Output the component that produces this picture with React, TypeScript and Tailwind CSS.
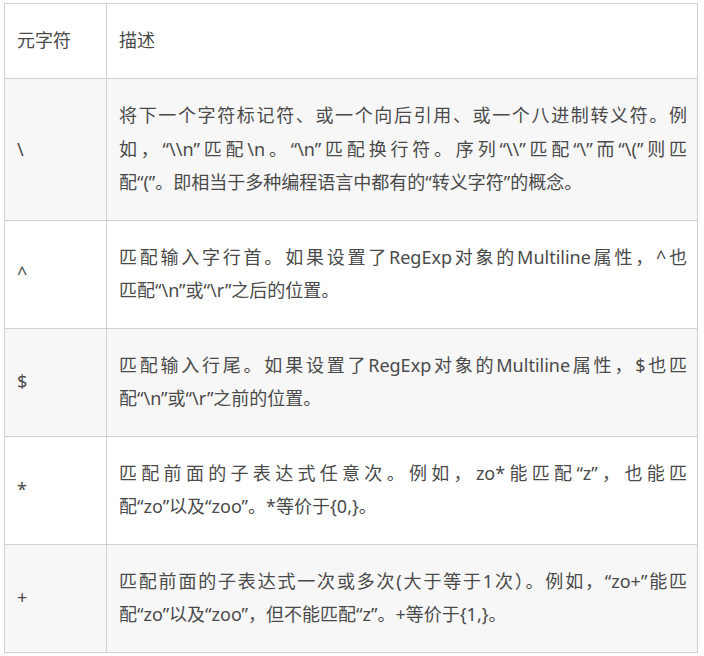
const rows: { ch: string; lines: string[] }[] = [
  {
    ch: '\\',
    lines: [
      '将下一个字符标记符、或一个向后引用、或一个八进制转义符。例',
      '如，“\\\\n”匹配\\n。“\\n”匹配换行符。序列“\\\\”匹配“\\”而“\\(”则匹',
      '配“(”。即相当于多种编程语言中都有的“转义字符”的概念。',
    ],
  },
  {
    ch: '^',
    lines: ['匹配输入字行首。如果设置了RegExp对象的Multiline属性，^也', '匹配“\\n”或“\\r”之后的位置。'],
  },
  {
    ch: '$',
    lines: ['匹配输入行尾。如果设置了RegExp对象的Multiline属性，$也匹', '配“\\n”或“\\r”之前的位置。'],
  },
  {
    ch: '*',
    lines: ['匹配前面的子表达式任意次。例如，zo*能匹配“z”，也能匹', '配“zo”以及“zoo”。*等价于{0,}。'],
  },
  {
    ch: '+',
    lines: ['匹配前面的子表达式一次或多次(大于等于1次）。例如，“zo+”能匹', '配“zo”以及“zoo”，但不能匹配“z”。+等价于{1,}。'],
  },
]

export default function App() {
  return (
    <div
      className="w-[704px] h-[656px] overflow-hidden bg-white pl-1 pt-[3px] text-[18px] leading-[33.5px] text-[#4a4a4a]"
      style={{ fontFamily: '"Noto Sans", "Noto Sans CJK SC", sans-serif' }}
    >
      <div className="w-[694px] border-l border-t border-r border-[#d0d0d0]">
        <div className="flex h-[75px] border-b border-[#d0d0d0] bg-white">
          <div className="w-[102px] shrink-0 border-r border-[#d0d0d0] pl-3 flex items-center">元字符</div>
          <div className="flex-1 pl-3 flex items-center">描述</div>
        </div>
        {rows.map((r, i) => (
          <div
            key={i}
            className={`flex border-b border-[#d0d0d0] ${i % 2 === 0 ? 'bg-[#f7f7f7]' : 'bg-white'}`}
          >
            <div className="w-[102px] shrink-0 border-r border-[#d0d0d0] pl-3 flex items-center">{r.ch}</div>
            <div className="flex-1 pl-3 pr-[10px] py-[20px]">
              {r.lines.map((l, j) => (
                <div
                  key={j}
                  className={j < r.lines.length - 1 ? 'whitespace-nowrap [text-align-last:justify]' : 'whitespace-nowrap'}
                >
                  {l}
                </div>
              ))}
            </div>
          </div>
        ))}
      </div>
    </div>
  )
}
